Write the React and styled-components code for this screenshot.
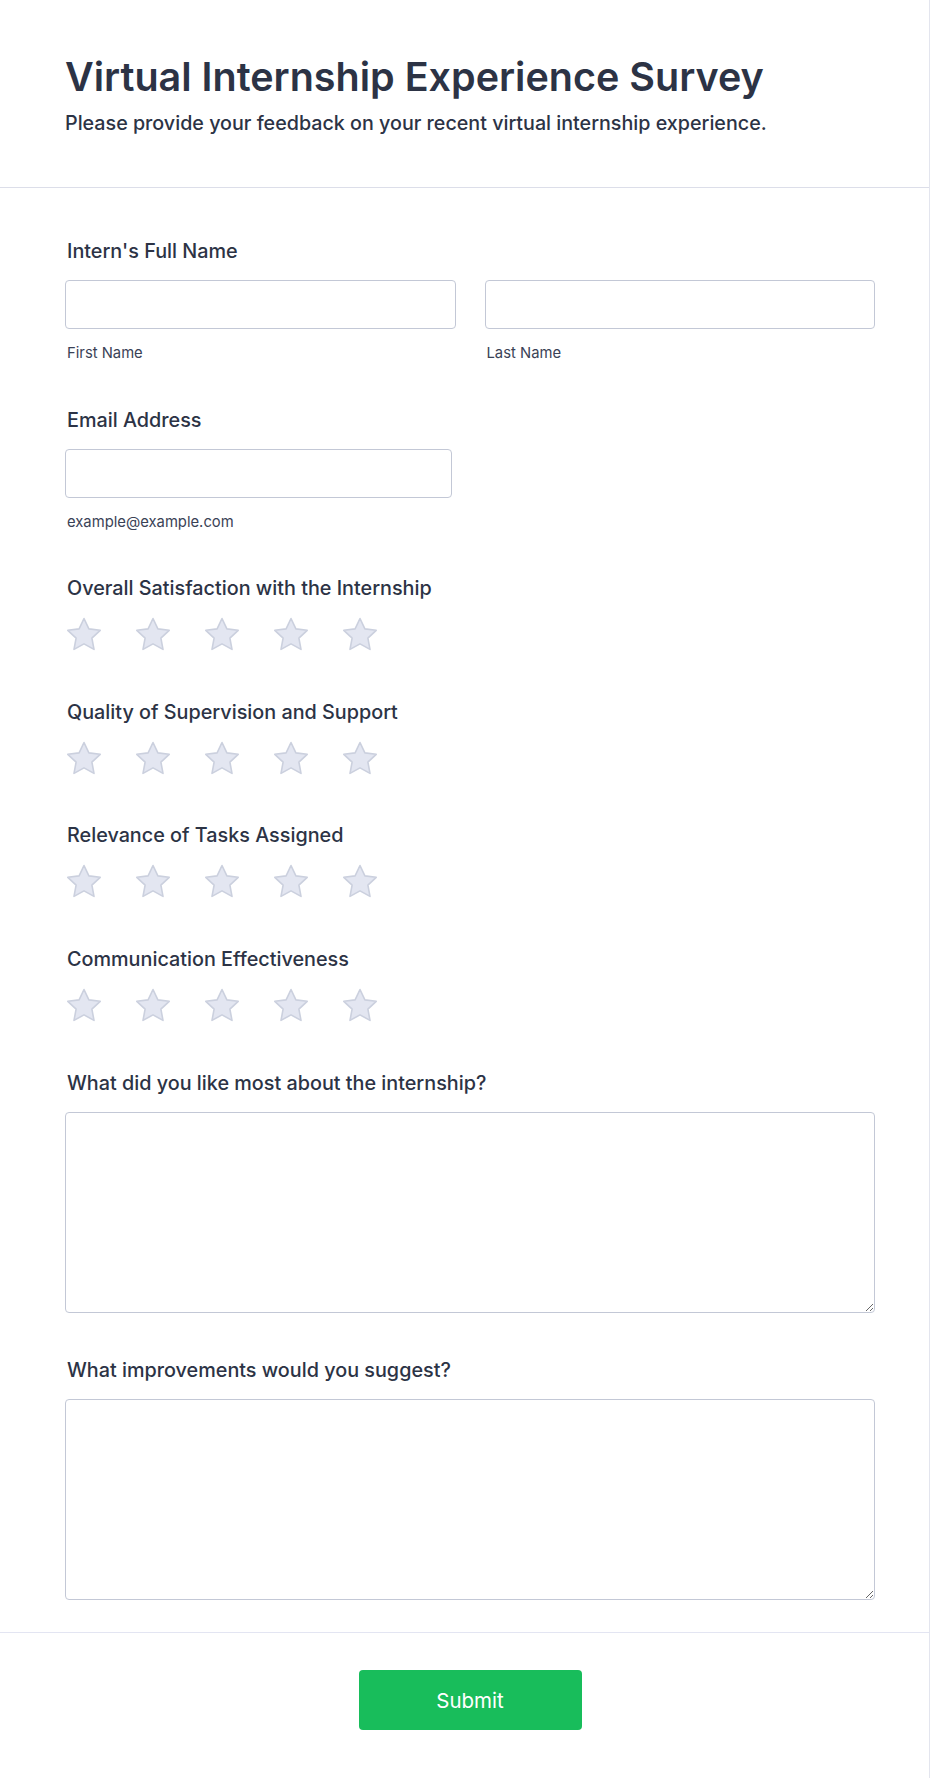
import React from "react";
import styled, { createGlobalStyle } from "styled-components";

const GlobalStyle = createGlobalStyle`
  * { box-sizing: border-box; }
  body {
    margin: 0;
    background: #ffffff;
    font-family: Inter, "Noto Sans", Arial, sans-serif;
    color: #2c3345;
  }
`;

const Page = styled.div`
  width: 930px;
  min-height: 1778px;
  border-right: 1px solid #e3e5ee;
  background: #fff;
`;

const Header = styled.header`
  padding: 55px 54px 52px 65px;
  border-bottom: 1px solid #dcdee9;
  display: flex;
  flex-direction: column;
  gap: 12px;
`;

const Title = styled.h1`
  margin: 0;
  font-size: 39.5px;
  line-height: 44px;
  font-weight: 600;
  color: #2c3345;
`;

const Subtitle = styled.p`
  margin: 0;
  font-size: 19.7px;
  line-height: 24px;
  font-weight: 500;
  color: #2c3345;
`;

const Form = styled.form`
  padding: 51px 54px 32px 65px;
  display: flex;
  flex-direction: column;
  gap: 45.6px;
`;

const Field = styled.div`
  display: flex;
  flex-direction: column;
`;

const Label = styled.label`
  font-size: 19.8px;
  line-height: 24px;
  font-weight: 500;
  padding-left: 2px;
  margin-bottom: ${({ $gap }) => $gap ?? 17}px;
  color: #2c3345;
`;

const Row = styled.div`
  display: grid;
  grid-template-columns: ${({ $cols }) => $cols};
  column-gap: 29px;
`;

const Column = styled.div`
  display: flex;
  flex-direction: column;
`;

const Input = styled.input`
  height: 49px;
  width: 100%;
  border: 1px solid #c3c8d6;
  border-radius: 4px;
  padding: 0 12px;
  font-size: 16px;
  font-family: inherit;
  outline: none;
`;

const SubLabel = styled.span`
  margin-top: 15px;
  padding-left: 2px;
  font-size: 14.8px;
  line-height: 18px;
  color: #3a4256;
`;

const Stars = styled.div`
  display: flex;
  gap: 31px;
`;

const StarBox = styled.svg`
  width: 38px;
  height: 38px;
  display: block;
`;

const TextArea = styled.textarea`
  width: 100%;
  height: 201px;
  border: 1px solid #c3c8d6;
  border-radius: 4px;
  padding: 10px 12px;
  font-size: 16px;
  font-family: inherit;
  outline: none;
  resize: vertical;
`;

const Footer = styled.div`
  border-top: 1px solid #e3e5f2;
  padding: 37px 0 49px;
  display: flex;
  justify-content: center;
`;

const SubmitButton = styled.button`
  width: 223px;
  height: 60px;
  background: #18bd5b;
  border: none;
  border-radius: 4px;
  color: #fff;
  font-family: inherit;
  font-size: 20.5px;
  font-weight: 400;
  margin-left: 11px;
  cursor: pointer;
`;

const Star = () => (
  <StarBox viewBox="0 0 38 38">
    <path
      d="M19 2.5 L23.9 12.9 L35.2 14.3 L26.9 22.1 L29 33.4 L19 27.9 L9 33.4 L11.1 22.1 L2.8 14.3 L14.1 12.9 Z"
      fill="#e3e6f1"
      stroke="#cbd0de"
      strokeWidth="1.6"
      strokeLinejoin="round"
    />
  </StarBox>
);

const Rating = ({ label }) => (
  <Field>
    <Label $gap={16}>{label}</Label>
    <Stars>
      {[1, 2, 3, 4, 5].map((n) => (
        <Star key={n} />
      ))}
    </Stars>
  </Field>
);

const ratings = [
  "Overall Satisfaction with the Internship",
  "Quality of Supervision and Support",
  "Relevance of Tasks Assigned",
  "Communication Effectiveness",
];

export default function App() {
  return (
    <Page>
      <GlobalStyle />
      <Header>
        <Title>Virtual Internship Experience Survey</Title>
        <Subtitle>
          Please provide your feedback on your recent virtual internship experience.
        </Subtitle>
      </Header>
      <Form onSubmit={(e) => e.preventDefault()}>
        <Field>
          <Label>Intern's Full Name</Label>
          <Row $cols="1fr 1fr">
            <Column>
              <Input type="text" />
              <SubLabel>First Name</SubLabel>
            </Column>
            <Column>
              <Input type="text" />
              <SubLabel>Last Name</SubLabel>
            </Column>
          </Row>
        </Field>
        <Field>
          <Label>Email Address</Label>
          <Row $cols="387px">
            <Column>
              <Input type="email" />
              <SubLabel>example@example.com</SubLabel>
            </Column>
          </Row>
        </Field>
        {ratings.map((r) => (
          <Rating key={r} label={r} />
        ))}
        <Field>
          <Label>What did you like most about the internship?</Label>
          <TextArea />
        </Field>
        <Field>
          <Label>What improvements would you suggest?</Label>
          <TextArea />
        </Field>
      </Form>
      <Footer>
        <SubmitButton type="submit">Submit</SubmitButton>
      </Footer>
    </Page>
  );
}
